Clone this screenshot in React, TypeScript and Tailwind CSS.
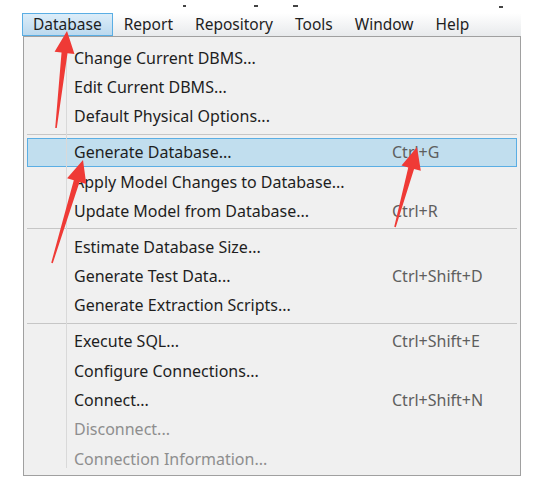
import React from "react";

type Item = {
  label: string;
  shortcut?: string;
  disabled?: boolean;
  active?: boolean;
};

const groups: Item[][] = [
  [
    { label: "Change Current DBMS..." },
    { label: "Edit Current DBMS..." },
    { label: "Default Physical Options..." },
  ],
  [
    { label: "Generate Database...", shortcut: "Ctrl+G", active: true },
    { label: "Apply Model Changes to Database..." },
    { label: "Update Model from Database...", shortcut: "Ctrl+R" },
  ],
  [
    { label: "Estimate Database Size..." },
    { label: "Generate Test Data...", shortcut: "Ctrl+Shift+D" },
    { label: "Generate Extraction Scripts..." },
  ],
  [
    { label: "Execute SQL...", shortcut: "Ctrl+Shift+E" },
    { label: "Configure Connections..." },
    { label: "Connect...", shortcut: "Ctrl+Shift+N" },
    { label: "Disconnect...", disabled: true },
    { label: "Connection Information...", disabled: true },
  ],
];

const menus = ["Database", "Report", "Repository", "Tools", "Window", "Help"];

// red annotation arrows: [tailX, tailY, tipX, tipY]
const arrows: number[][] = [
  [56, 128, 67, 31],
  [52, 263, 83, 160],
  [395, 227, 417, 147],
];

function arrowPoints(a: number[]) {
  const [tx, ty, px, py] = a;
  const len = Math.hypot(px - tx, py - ty);
  const dx = (px - tx) / len;
  const dy = (py - ty) / len;
  const nx = -dy;
  const ny = dx;
  const L = 22;
  const bx = px - dx * L;
  const by = py - dy * L;
  const pts = [
    [px, py],
    [bx + nx * 10, by + ny * 10],
    [bx + nx * 3, by + ny * 3],
    [tx + nx * 0.8, ty + ny * 0.8],
    [tx - nx * 0.8, ty - ny * 0.8],
    [bx - nx * 3, by - ny * 3],
    [bx - nx * 10, by - ny * 10],
  ];
  return pts.map((p) => p.join(",")).join(" ");
}

function MenuRow({ item }: { item: Item }) {
  const color = item.disabled ? "text-[#8e8e8e]" : "text-[#1e1e1e]";
  return (
    <div
      className={
        "mx-[3px] h-[29.3px] flex items-center border " +
        (item.active
          ? "border-[#5aaee4] bg-[#c1deee]"
          : "border-transparent")
      }
    >
      <span className={"pl-[46px] w-[364px] whitespace-nowrap " + color}>
        {item.label}
      </span>
      {item.shortcut && (
        <span className="text-[#5e5e5e] whitespace-nowrap">
          {item.shortcut}
        </span>
      )}
    </div>
  );
}

export default function App() {
  return (
    <div className="relative w-[544px] h-[486px] bg-white overflow-hidden font-['Noto_Sans',sans-serif] text-[16px]">
      {/* bits of cut-off text above the menu bar */}
      <div className="h-[13px] flex items-start pt-[5px] pl-[183px]">
        <div className="w-[3px] h-[2px] bg-[#444]" />
        <div className="ml-[68px] w-[4px] h-[2px] bg-[#444]" />
        <div className="ml-[35px] w-[5px] h-[2px] bg-[#444]" />
        <div className="ml-[201px] mt-px w-[4px] h-[2px] bg-[#444]" />
      </div>

      <div className="ml-[22px] w-[499px]">
        <div className="h-[23px] flex items-stretch bg-gradient-to-b from-white to-[#e8eaec]">
          {menus.map((m, i) => (
            <div
              key={m}
              className={
                "flex items-center px-[10px] text-[15.5px] text-[#1e1e1e] border " +
                (i === 0
                  ? "border-[#5aaee4] bg-gradient-to-b from-[#dcedf9] to-[#bcd9ee]"
                  : "border-transparent")
              }
            >
              {m}
            </div>
          ))}
        </div>

        <div className="relative ml-[1px] w-[498px] h-[440px] border border-[#a0a0a0] bg-[#f0f0f0] pt-[6px]">
          <div className="absolute left-[42px] top-0 h-[431px] w-px bg-[#d9d9d9]" />
          {groups.map((g, gi) => (
            <div key={gi}>
              {gi > 0 && (
                <div className="h-[6.7px] flex items-center mx-[3px]">
                  <div className="h-px w-full bg-[#c6c6c6]" />
                </div>
              )}
              {g.map((it) => (
                <MenuRow key={it.label} item={it} />
              ))}
            </div>
          ))}
        </div>
      </div>

      <svg
        className="absolute inset-0 pointer-events-none"
        width="544"
        height="486"
      >
        {arrows.map((a, i) => (
          <polygon key={i} points={arrowPoints(a)} fill="#ef3a36" />
        ))}
      </svg>
    </div>
  );
}
